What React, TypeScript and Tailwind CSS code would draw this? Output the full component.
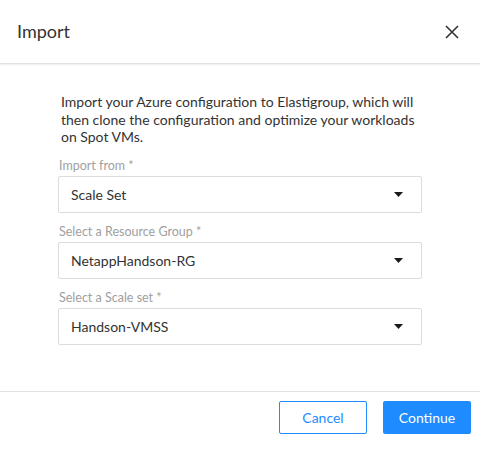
const fields = [
  { label: "Import from *", value: "Scale Set" },
  { label: "Select a Resource Group *", value: "NetappHandson-RG" },
  { label: "Select a Scale set *", value: "Handson-VMSS" },
];

const Caret = () => (
  <svg width="9" height="5" viewBox="0 0 9 5" className="shrink-0">
    <path d="M0 0h9L4.5 5z" fill="#1a1a1a" />
  </svg>
);

export default function App() {
  return (
    <div
      className="w-[480px] h-[449px] bg-white flex flex-col text-[#333]"
      style={{ fontFamily: "Lato, 'Noto Sans', sans-serif" }}
    >
      <div className="h-[64px] shrink-0 flex items-center justify-between pl-[17px] pr-[21px] border-b border-[#e2e2e2] shadow-[0_1px_2px_rgba(0,0,0,0.08)]">
        <span className="text-[18px] text-[#333]">Import</span>
        <svg width="14" height="14" viewBox="0 0 14 14">
          <path d="M1 1l12 12M13 1L1 13" stroke="#333" strokeWidth="1.6" />
        </svg>
      </div>

      <div className="flex-1 pl-[58px] pr-[58px] pt-[29px]">
        <p className="text-[14px] leading-[17.5px] text-[#333] pl-[3px] pr-[4px]">
          Import your Azure configuration to Elastigroup, which will then clone the configuration and optimize your workloads on Spot VMs.
        </p>
        <div className="mt-[12px] flex flex-col gap-[11px]">
          {fields.map((f) => (
            <div key={f.label} className="flex flex-col">
              <span className="text-[12.5px] leading-[16px] text-[#a0a0a0] pl-[1px] mb-[2px]">{f.label}</span>
              <div className="h-[37px] border border-[#dcdcdc] rounded-[2px] flex items-center justify-between pl-[12px] pr-[18px]">
                <span className="text-[14px] text-[#333]">{f.value}</span>
                <Caret />
              </div>
            </div>
          ))}
        </div>
      </div>

      <div className="h-[57px] shrink-0 border-t border-[#e2e2e2] flex items-start justify-end gap-[16px] pr-[9px] pt-[9px] mb-[1px]">
        <button className="w-[88px] h-[33px] border border-[#1e8cff] rounded-[2px] text-[#1e8cff] text-[14px]">
          Cancel
        </button>
        <button className="w-[88px] h-[33px] bg-[#1e8cff] rounded-[2px] text-white text-[14px]">
          Continue
        </button>
      </div>
    </div>
  );
}
